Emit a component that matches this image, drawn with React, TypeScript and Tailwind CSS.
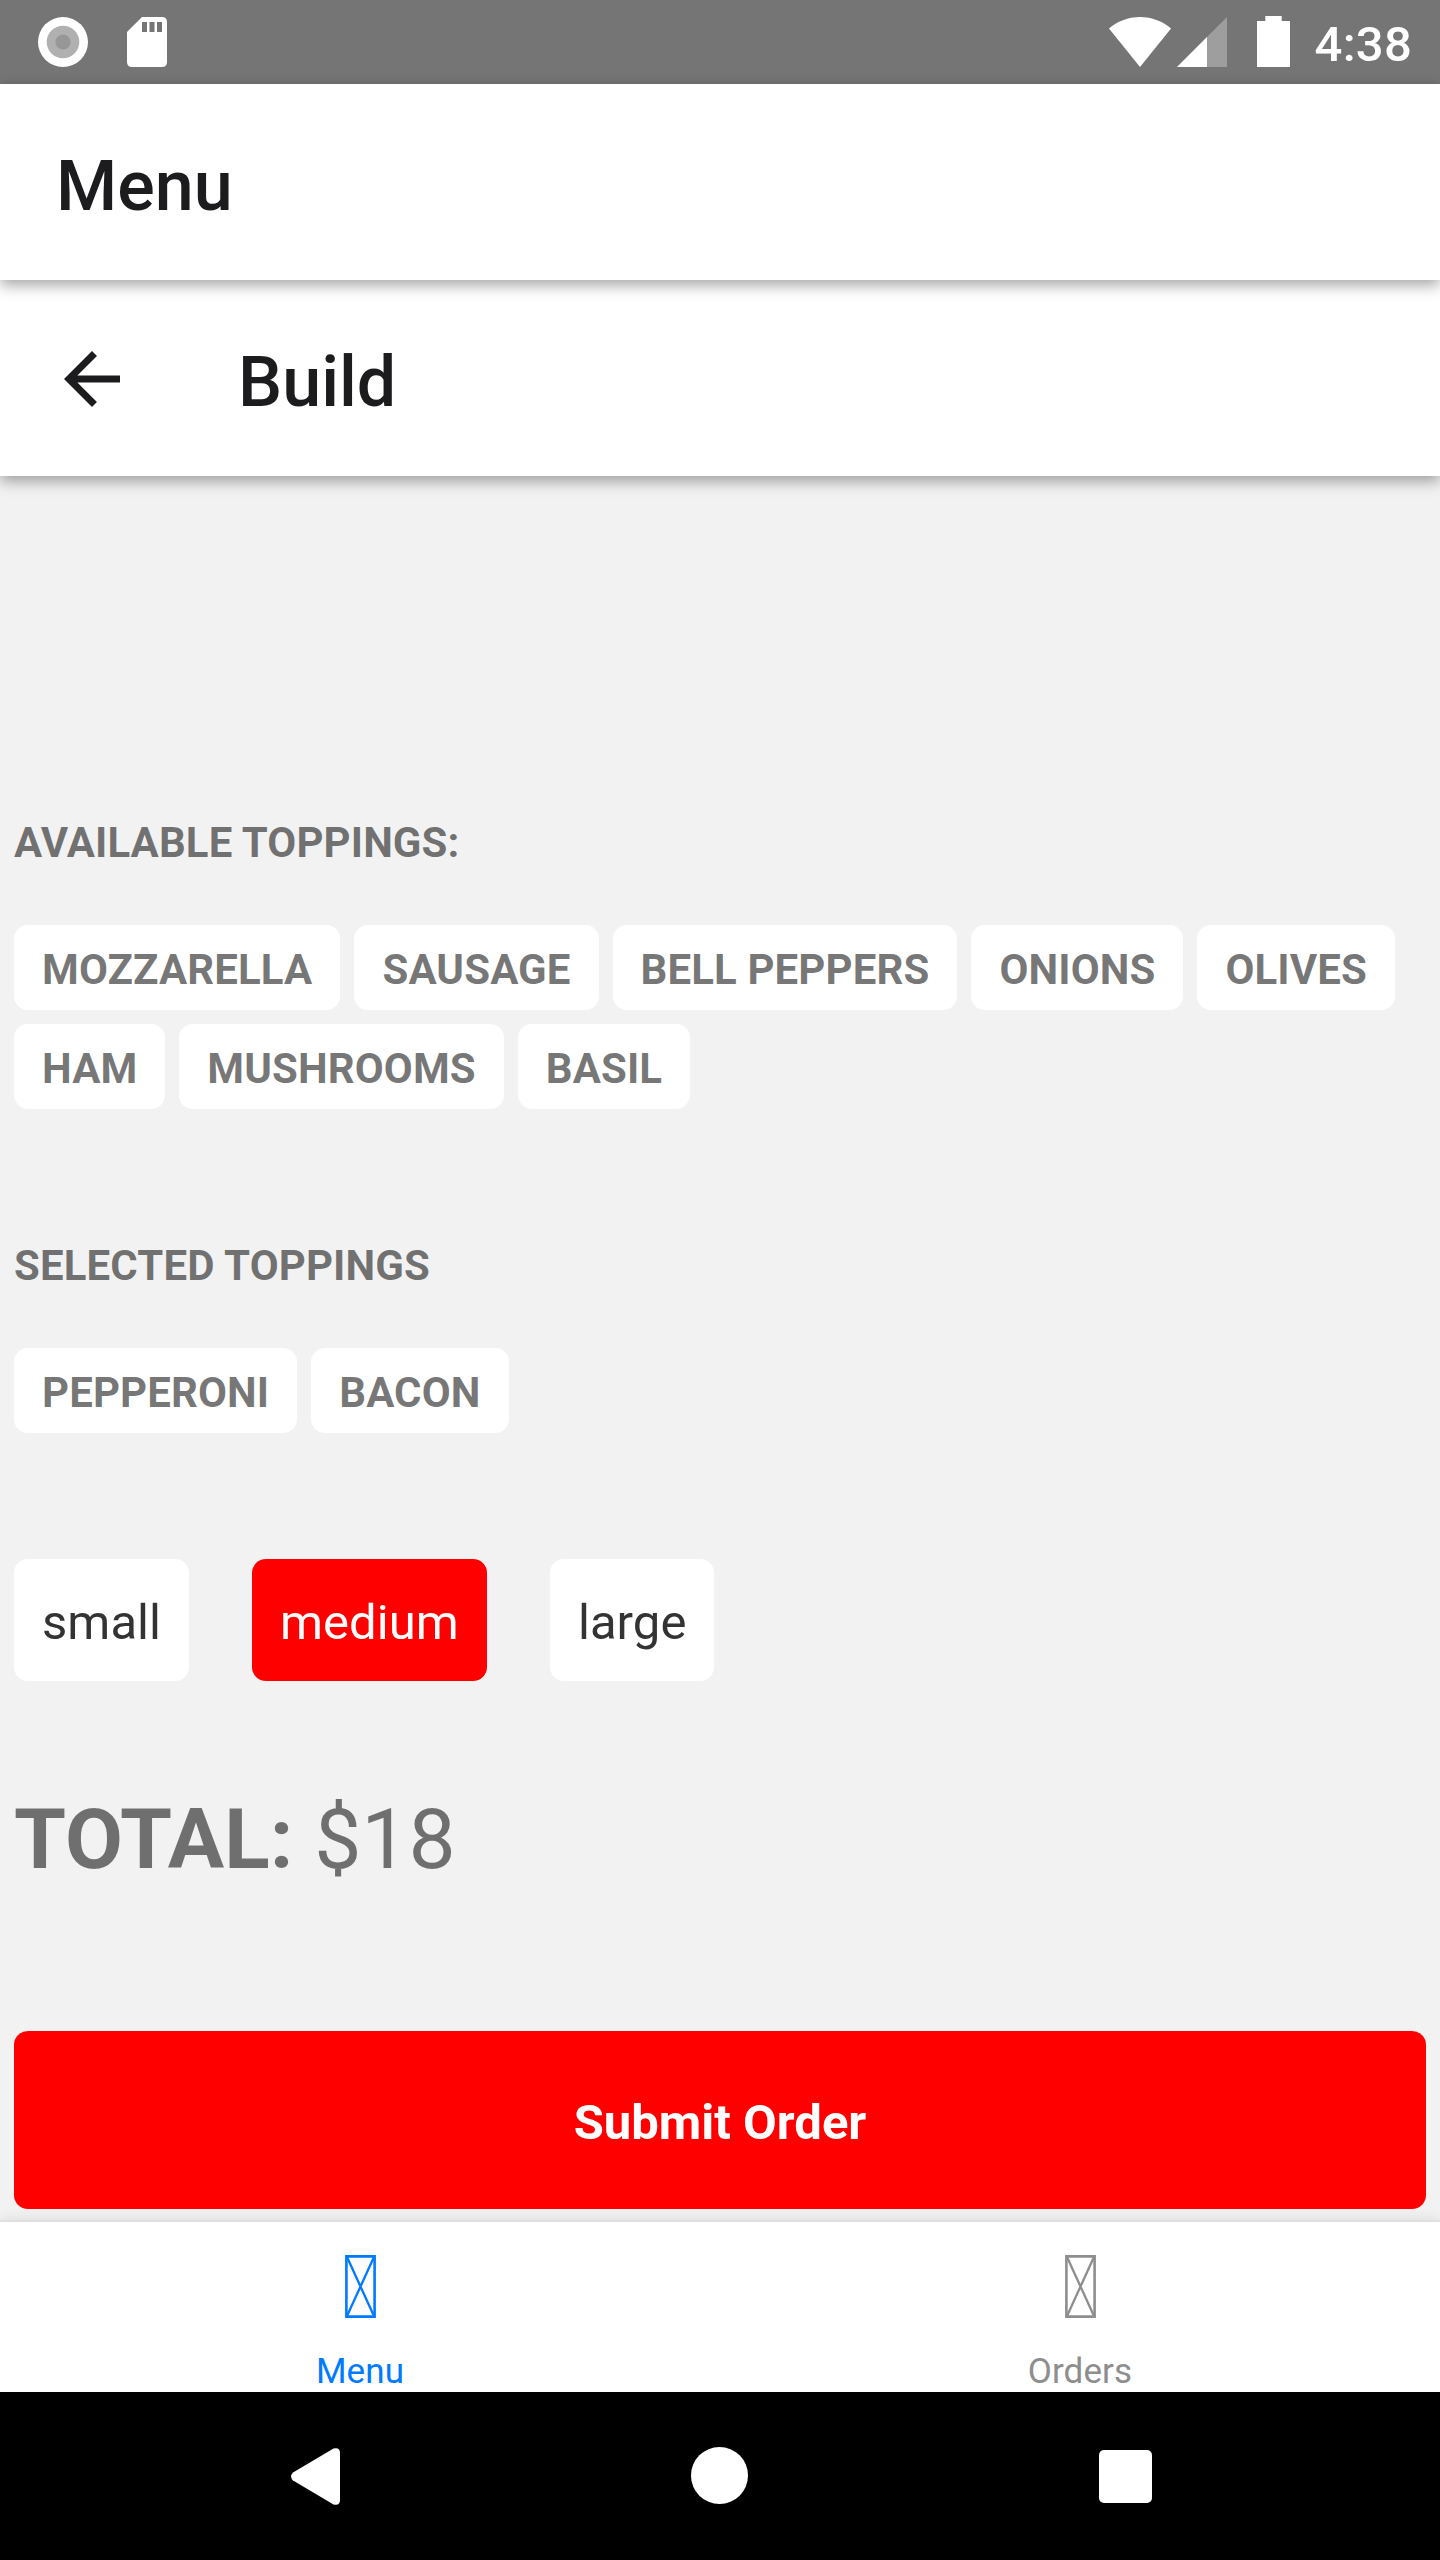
const AVAILABLE = ['MOZZARELLA', 'SAUSAGE', 'BELL PEPPERS', 'ONIONS', 'OLIVES', 'HAM', 'MUSHROOMS', 'BASIL'];
const SELECTED = ['PEPPERONI', 'BACON'];
const SIZES = ['small', 'medium', 'large'];

function StatusBar() {
  return (
    <div className="flex h-[84px] shrink-0 items-start justify-between bg-[#757575] pl-[38px] pr-[28px]">
      <div className="flex gap-[39px] pt-[17px]">
        <svg width="50" height="50" viewBox="0 0 50 50">
          <circle cx="25" cy="25" r="25" fill="#fff" />
          <circle cx="25" cy="25" r="16.3" fill="#b0b0b0" />
          <circle cx="25" cy="25" r="7.6" fill="#979797" />
        </svg>
        <svg width="40" height="50" viewBox="0 0 40 50">
          <path d="M15 0H35Q40 0 40 5V45Q40 50 35 50H5Q0 50 0 45V15Z" fill="#fff" />
          <path d="M15 5h5v10h-5zM22.5 5h5v10h-5zM30 5h5v10h-5z" fill="#757575" />
        </svg>
      </div>
      <div className="flex">
        <svg className="mt-[17px]" width="62" height="50" viewBox="0 0 62 50">
          <path d="M31 50L0 11.5C8 4.5 19 0 31 0S54 4.5 62 11.5Z" fill="#fff" />
        </svg>
        <svg className="ml-[6px] mt-[17px]" width="50" height="50" viewBox="0 0 50 50">
          <path d="M0 50L50 0V50Z" fill="#9e9e9e" />
          <path d="M0 50L30 20V50Z" fill="#fff" />
        </svg>
        <svg className="ml-[30px] mt-[16px]" width="33" height="51" viewBox="0 0 33 51">
          <path d="M8.3 0H24.7V5H33V51H0V5H8.3Z" fill="#fff" />
        </svg>
        <span className="ml-[25px] mt-[16px] text-[49px] font-medium leading-[57px] tracking-[0.25px] text-white">4:38</span>
      </div>
    </div>
  );
}

function Chips({ items }: { items: string[] }) {
  return (
    <div className="mt-[58px] flex flex-wrap gap-[14px]">
      {items.map((t) => (
        <div key={t} className="h-[85px] rounded-[14px] bg-white px-[28px] pt-[4px] text-[42px] font-bold leading-[81px] tracking-[0.11px] text-black/54">
          {t}
        </div>
      ))}
    </div>
  );
}

function Tab({ label, active }: { label: string; active?: boolean }) {
  return (
    <div className={`flex flex-1 flex-col items-center pt-[33px] ${active ? 'text-[#007aff]' : 'text-[#8e8e8f]'}`}>
      <svg width="31" height="63" viewBox="0 0 31 63" fill="none" stroke="currentColor">
        <path d="M1.4 1.4H29.6V61.6H1.4Z" strokeWidth="2.6" />
        <path d="M1.8 1.4L29.2 61.6M29.2 1.4L1.8 61.6" strokeWidth="2.3" />
      </svg>
      <span className="mt-[33px] text-[35px] leading-[41px] tracking-[0.12px]">{label}</span>
    </div>
  );
}

export default function App() {
  return (
    <div className="flex h-[2560px] w-[1440px] flex-col overflow-hidden bg-[#f2f2f2] font-[Roboto,sans-serif]">
      <StatusBar />
      <header className="relative z-20 h-[196px] shrink-0 bg-white px-[56px] pt-[61px] shadow-[0_5px_14px_rgba(0,0,0,0.36)]">
        <h1 className="text-[70px] font-medium leading-[82px] text-[#1c1c1e]">Menu</h1>
      </header>
      <header className="relative z-10 flex h-[196px] shrink-0 bg-white pl-[50px] shadow-[0_5px_14px_rgba(0,0,0,0.36)]">
        <svg className="mt-[57px]" width="84" height="84" viewBox="0 0 24 24" fill="#1c1c1e">
          <path d="M20 11H7.83l5.59-5.59L12 4l-8 8 8 8 1.41-1.41L7.83 13H20v-2z" />
        </svg>
        <h2 className="ml-[104px] mt-[61px] text-[70px] font-medium leading-[82px] text-[#1c1c1e]">Build</h2>
      </header>

      <main className="flex h-[1744px] shrink-0 flex-col px-[14px] pt-[342px]">
        <h3 className="text-[42px] font-bold leading-[49px] tracking-[0.1px] text-black/54">AVAILABLE TOPPINGS:</h3>
        <Chips items={AVAILABLE} />
        <h3 className="mt-[132px] text-[42px] font-bold leading-[49px] tracking-[0.12px] text-black/54">SELECTED TOPPINGS</h3>
        <Chips items={SELECTED} />
        <div className="mt-[126px] flex gap-[63px]">
          {SIZES.map((s) => (
            <div
              key={s}
              className={`h-[122px] rounded-[14px] px-[28px] pt-[5px] text-[49px] leading-[117px] tracking-[0.06px] ${
                s === 'medium' ? 'bg-[#ff0000] text-white' : 'bg-white text-[#333333]'
              }`}
            >
              {s}
            </div>
          ))}
        </div>
        <p className="mt-[109px] text-[84px] leading-[99px] text-black/54">
          <span className="font-bold">TOTAL:</span> $18
        </p>
        <button className="mt-[142px] h-[178px] rounded-[14px] bg-[#ff0000] pt-[5px] text-center text-[49px] font-bold leading-[173px] text-white">
          Submit Order
        </button>
      </main>

      <nav className="flex h-[172px] shrink-0 border-t-2 border-[#e0e0e0] bg-white shadow-[0_0_14px_rgba(0,0,0,0.1)]">
        <Tab label="Menu" active />
        <Tab label="Orders" />
      </nav>

      <div className="relative z-10 flex h-[168px] shrink-0 bg-black pl-[291px] pt-[55px]">
        <svg className="mt-px" width="49" height="57" viewBox="0 0 49 57">
          <path d="M2 24.5L42.5 .6Q49 -1 49 5V52Q49 58 42.5 56.4L2 32.5Q-1.8 28.5 2 24.5Z" fill="#fff" />
        </svg>
        <div className="ml-[351px] size-[57px] rounded-full bg-white" />
        <div className="ml-[351px] mt-[3px] size-[53px] rounded-[5px] bg-white" />
      </div>
    </div>
  );
}
